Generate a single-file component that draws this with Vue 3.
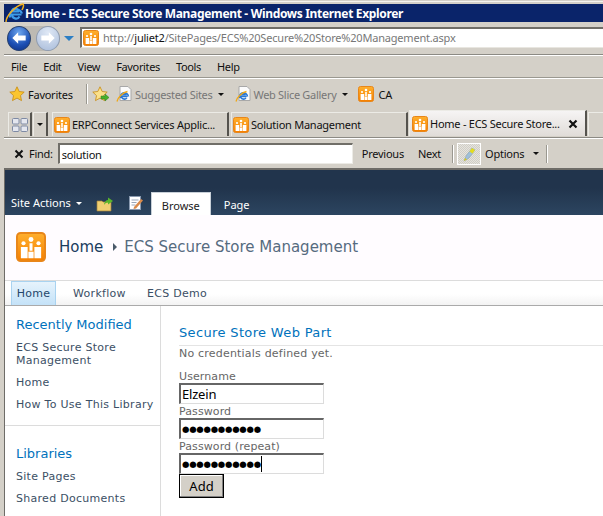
<template>
  <div class="window">
    <svg class="defs" width="0" height="0">
      <defs>
        <linearGradient id="spBg" x1="0" y1="0" x2="0" y2="1">
          <stop offset="0" stop-color="#ffb02e" />
          <stop offset="1" stop-color="#f57f00" />
        </linearGradient>
        <symbol id="sp" viewBox="0 0 16 16">
          <rect x="0.5" y="0.5" width="15" height="15" rx="2" fill="url(#spBg)" stroke="#e8861a" />
          <circle cx="8" cy="4" r="1.3" fill="#fff" />
          <circle cx="4" cy="6" r="1.1" fill="#fff" />
          <circle cx="12" cy="6" r="1.1" fill="#fff" />
          <rect x="7.2" y="6" width="1.6" height="4" fill="#fff" />
          <rect x="2.6" y="8" width="3.6" height="6" fill="#fff" />
          <rect x="9.8" y="8" width="3.6" height="6" fill="#fff" />
          <rect x="6.6" y="10.5" width="2.8" height="3.5" fill="#fff" />
        </symbol>
        <symbol id="ie" viewBox="0 0 16 16">
          <path d="M4 .5h8l3 3v11H4z" fill="#fbfbfb" stroke="#a8a8a8" />
          <path d="M11.600 10.500H5.600a2.900 2.900 0 0 0 5.300 1.300M5.700 8.800h4.200a2.200 2.200 0 0 0-4.200 0zM4.700 12a4 4 0 1 1 7.800-1.500" fill="none" stroke="#2a78d4" stroke-width="1.500" />
          <path d="M1 15.500C2 11 7 6.500 11.500 5.500" fill="none" stroke="#f0a818" stroke-width="1.300" />
        </symbol>
      </defs>
    </svg>

    <div class="title-bar">
      <svg class="title-ie" viewBox="0 0 20 20" width="20" height="20">
        <path d="M16.500 11.500H7a4 4 0 0 0 7.500 2M7.200 8.500h6a3 3 0 0 0-6 0z" fill="none" stroke="#3d9be8" stroke-width="2.200" />
        <path d="M5.200 14.500A6.200 6.200 0 1 1 17 10.500" fill="none" stroke="#3d9be8" stroke-width="2.200" />
        <path d="M1 19C1 13 10 3 18 1c1.500 1.500 0 4-1 6" fill="none" stroke="#f2b01e" stroke-width="1.500" />
      </svg>
      <span>Home - ECS Secure Store Management - Windows Internet Explorer</span>
    </div>

    <div class="address-row">
      <div class="nav-buttons">
        <span class="round back">
          <svg viewBox="0 0 24 24" width="24" height="24"><path d="M4 12l7-7v4h9v6h-9v4z" fill="#fff" /></svg>
        </span>
        <span class="round forward">
          <svg viewBox="0 0 24 24" width="24" height="24"><path d="M20 12l-7-7v4H4v6h9v4z" fill="#fff" /></svg>
        </span>
      </div>
      <span class="nav-drop"></span>
      <div class="address-box">
        <svg class="sp-small" width="16" height="16"><use href="#sp" /></svg>
        <span class="url">http://<b>juliet2</b>/SitePages/ECS%20Secure%20Store%20Management.aspx</span>
      </div>
    </div>

    <div class="menu-row">
      <span v-for="item in menuItems" :key="item">{{ item }}</span>
    </div>

    <div class="fav-row">
      <svg class="star" viewBox="0 0 16 16" width="16" height="16">
        <path d="M8 .8l2.200 4.700 5 .6-3.700 3.500 1 5L8 12.100 3.500 14.600l1-5L.8 6.100l5-.6z" fill="#fbc52f" stroke="#c68a12" stroke-width=".8" />
      </svg>
      <span class="fav-label">Favorites</span>
      <span class="fav-sep"></span>
      <svg class="star-add" viewBox="0 0 18 16" width="18" height="16">
        <path d="M8 .8l2.200 4.700 5 .6-3.700 3.500 1 5L8 12.100 3.500 14.600l1-5L.8 6.100l5-.6z" fill="#fbe08a" stroke="#c68a12" stroke-width=".8" />
        <path d="M9 10h4V8l4 3.500L13 15v-2H9z" fill="#47b02c" stroke="#2f7d1c" stroke-width=".5" />
      </svg>
      <svg class="page-ie" width="16" height="16"><use href="#ie" /></svg>
      <span class="fav-muted">Suggested Sites</span>
      <span class="caret dark"></span>
      <svg class="page-ie second" width="16" height="16"><use href="#ie" /></svg>
      <span class="fav-muted web">Web Slice Gallery</span>
      <span class="caret dark"></span>
      <svg class="sp-fav" width="16" height="16"><use href="#sp" /></svg>
      <span class="fav-ca">CA</span>
    </div>

    <div class="tab-row">
      <span class="quick-tabs">
        <svg viewBox="0 0 16 14" width="16" height="14">
          <rect x=".5" y=".5" width="6.500" height="5.500" rx="1" fill="#e4e6ee" stroke="#7e8aa4" />
          <rect x="9" y=".5" width="6.500" height="5.500" rx="1" fill="#e4e6ee" stroke="#7e8aa4" />
          <rect x=".5" y="8" width="6.500" height="5.500" rx="1" fill="#e4e6ee" stroke="#7e8aa4" />
          <rect x="9" y="8" width="6.500" height="5.500" rx="1" fill="#e4e6ee" stroke="#7e8aa4" />
        </svg>
      </span>
      <span class="tab-list-drop"><span class="caret dark"></span></span>
      <div class="tab first">
        <svg width="16" height="16"><use href="#sp" /></svg>
        <span>ERPConnect Services Applic...</span>
      </div>
      <div class="tab second">
        <svg width="16" height="16"><use href="#sp" /></svg>
        <span>Solution Management</span>
      </div>
      <div class="tab active">
        <svg width="16" height="16"><use href="#sp" /></svg>
        <span class="active-label">Home - ECS Secure Store...</span>
        <svg class="tab-close" viewBox="0 0 10 10" width="10" height="10">
          <path d="M1.500 1.500l7 7M8.500 1.500l-7 7" stroke="#111" stroke-width="2.200" />
        </svg>
      </div>
      <div class="tab stub"></div>
    </div>

    <div class="find-row">
      <svg class="find-close" viewBox="0 0 10 10" width="10" height="10">
        <path d="M1.500 1.500l7 7M8.500 1.500l-7 7" stroke="#111" stroke-width="2" />
      </svg>
      <span class="find-label">Find:</span>
      <div class="find-box">solution</div>
      <span class="find-link prev">Previous</span>
      <span class="find-link next">Next</span>
      <span class="find-sep"></span>
      <span class="highlight">
        <svg viewBox="0 0 18 18" width="18" height="18">
          <path d="M4 16l2-5 6-8 3 2-6 8z" fill="#9fc0d8" stroke="#7e9ab0" stroke-width=".5" />
          <path d="M9.500 6.500L12 3l3 2-2.500 3.500z" fill="#e4dc1e" />
          <path d="M4 16l1-3 2 1.500z" fill="#d8c81a" />
        </svg>
      </span>
      <span class="find-link options">Options</span>
      <span class="caret dark opt"></span>
      <span class="find-sep end"></span>
    </div>

    <div class="page">
      <div class="ribbon">
        <span class="site-actions">Site Actions</span>
        <span class="caret light"></span>
        <svg class="folder" viewBox="0 0 18 16" width="18" height="16">
          <path d="M1 5h5l1 1h8v9H1z" fill="#f0cf72" stroke="#a4823a" stroke-width=".7" />
          <path d="M8 9c0-3 2-5 4-5V1.500L17 5l-5 3.500V6.500c-2 0-3 1-4 2.500z" fill="#59b52c" />
        </svg>
        <svg class="edit" viewBox="0 0 16 16" width="16" height="16">
          <rect x="1.500" y="1.500" width="11" height="13" fill="#fff" stroke="#8a9ab0" />
          <path d="M3.500 5h7M3.500 7.500h5M3.500 10h4" stroke="#9aa6b8" />
          <path d="M6 12l7-8 2 1.500-7 8-2.500.5z" fill="#d98a4a" />
        </svg>
        <span class="ribbon-tab selected">Browse</span>
        <span class="ribbon-tab">Page</span>
      </div>

      <div class="site-title">
        <svg class="site-logo" width="30" height="30"><use href="#sp" /></svg>
        <span class="crumb-home">Home</span>
        <span class="crumb-arrow"></span>
        <span class="crumb-page">ECS Secure Store Management</span>
      </div>

      <div class="top-nav">
        <span class="top-item current">Home</span>
        <span class="top-item">Workflow</span>
        <span class="top-item">ECS Demo</span>
      </div>

      <div class="body-area">
        <aside class="side-nav">
          <section class="side-group recent">
            <h3>Recently Modified</h3>
            <a v-for="link in recentLinks" :key="link">{{ link }}</a>
          </section>
          <section class="side-group libraries">
            <h3>Libraries</h3>
            <a v-for="link in libraryLinks" :key="link">{{ link }}</a>
          </section>
        </aside>

        <main class="content">
          <h2>Secure Store Web Part</h2>
          <p class="status">No credentials defined yet.</p>
          <label>Username</label>
          <div class="field plain">Elzein</div>
          <label>Password</label>
          <div class="field dots">●●●●●●●●●●●</div>
          <label>Password (repeat)</label>
          <div class="field dots caret-end">●●●●●●●●●●●<i></i></div>
          <button type="button" class="add">Add</button>
        </main>
      </div>
    </div>
  </div>
</template>

<script setup>
const menuItems = ['File', 'Edit', 'View', 'Favorites', 'Tools', 'Help']
const recentLinks = ['ECS Secure Store Management', 'Home', 'How To Use This Library']
const libraryLinks = ['Site Pages', 'Shared Documents']
</script>

<style scoped>
.window {
  width: 603px;
  height: 516px;
  overflow: hidden;
  background: #d4d0c8;
  padding-top: 4px;
  box-sizing: border-box;
  box-shadow: inset 0 1px 0 #d4d0c8, inset 0 2px 0 #f4f3ef;
  font-family: "Noto Sans", "DejaVu Sans", sans-serif;
  font-size: 11px;
  letter-spacing: -0.25px;
  color: #111;
  position: relative;
}

.defs {
  position: absolute;
}

.title-bar {
  height: 18px;
  margin-left: 4px;
  background: #0a246a;
  color: #fff;
  display: flex;
  align-items: center;
  font-weight: 700;
  font-size: 12px;
  letter-spacing: -0.33px;
  white-space: nowrap;
}

.title-ie {
  margin: -1px 0 0 1px;
  flex: none;
}

.address-row {
  height: 33px;
  margin-left: 4px;
  display: flex;
  align-items: center;
  border-bottom: 1px solid #8c8a84;
  box-sizing: border-box;
}

.nav-buttons {
  display: flex;
  align-items: center;
  background: #bdbab3;
  border-radius: 14px;
  margin-left: 3px;
}

.round {
  width: 24px;
  height: 25px;
  border-radius: 50%;
  box-sizing: border-box;
  display: flex;
  align-items: center;
  justify-content: center;
}

.round svg {
  width: 20px;
  height: 20px;
}

.back {
  background: radial-gradient(circle at 50% 25%, #6ea7ee, #1c4fb4 60%, #0d2f80);
  border: 1px solid #26406f;
}

.forward {
  margin-left: 5px;
  background: radial-gradient(circle at 50% 25%, #dfe8f5, #a9bcda);
  border: 1px solid #8f9cb0;
}

.nav-drop {
  width: 0;
  height: 0;
  margin: 1px 6px 0 4px;
  border-left: 5px solid transparent;
  border-right: 5px solid transparent;
  border-top: 5px solid #2d7fc4;
}

.address-box {
  flex: 1;
  height: 21px;
  margin-top: -2px;
  display: flex;
  align-items: center;
  background: #fff;
  border-top: 2px solid #706e68;
  border-left: 2px solid #706e68;
  border-bottom: 1px solid #e8e6e0;
  box-sizing: border-box;
  white-space: nowrap;
}

.sp-small {
  margin-left: 1px;
  flex: none;
}

.url {
  margin-left: 4px;
  color: #777;
  letter-spacing: -0.2px;
}

.url b {
  color: #111;
  font-weight: 400;
}

.menu-row {
  height: 23px;
  margin-left: 4px;
  display: flex;
  align-items: center;
  gap: 16px;
  padding: 0 0 0 7px;
  border-top: 1px solid #fff;
  border-bottom: 1px solid #9a9890;
  box-sizing: border-box;
  letter-spacing: -0.35px;
}

.fav-row {
  height: 31px;
  margin-left: 4px;
  display: flex;
  align-items: center;
  border-top: 1px solid #fff;
  box-sizing: border-box;
}

.star {
  margin-left: 5px;
  flex: none;
}

.fav-label {
  margin-left: 3px;
  width: 45px;
}

.fav-sep {
  width: 1px;
  height: 20px;
  margin: 0 4px 0 13px;
  background: #9a9890;
  border-right: 1px solid #fff;
}

.star-add {
  flex: none;
}

.page-ie {
  margin-left: 6px;
  flex: none;
}

.page-ie.second {
  margin-left: 11px;
}

.fav-muted {
  margin-left: 3px;
  color: #777;
  letter-spacing: -0.3px;
}

.fav-muted.web {
  margin-left: 2px;
}

.caret {
  width: 0;
  height: 0;
  margin-left: 6px;
  border-left: 3px solid transparent;
  border-right: 3px solid transparent;
  flex: none;
}

.caret.dark {
  border-top: 3px solid #111;
}

.caret.light {
  border-top: 3px solid #fff;
}

.sp-fav {
  margin-left: 10px;
  flex: none;
}

.fav-ca {
  margin-left: 4px;
}

.tab-row {
  height: 29px;
  margin-left: 4px;
  display: flex;
  align-items: flex-end;
  border-bottom: 1px solid #8c8a84;
  box-sizing: border-box;
}

.quick-tabs {
  width: 21px;
  height: 23px;
  margin: 0 0 1px 4px;
  display: flex;
  flex: none;
  align-items: center;
  justify-content: center;
  border-top: 1px solid #ecebe6;
  border-left: 1px solid #ecebe6;
  border-right: 2px solid #55534e;
  box-sizing: content-box;
}

.tab-list-drop {
  width: 12px;
  height: 23px;
  margin: 0 0 1px 1px;
  display: flex;
  flex: none;
  align-items: center;
  border-top: 1px solid #ecebe6;
  border-left: 1px solid #ecebe6;
  border-right: 2px solid #55534e;
}

.tab-list-drop .caret {
  margin-left: 3px;
}

.tab {
  height: 23px;
  display: flex;
  align-items: center;
  gap: 2px;
  padding-left: 1px;
  margin-bottom: 1px;
  border-top: 1px solid #ecebe6;
  border-left: 1px solid #ecebe6;
  border-right: 2px solid #55534e;
  white-space: nowrap;
  flex: none;
  box-sizing: content-box;
}

.tab svg {
  flex: none;
}

.tab.first {
  width: 173px;
  margin-left: 4px;
}

.tab.second {
  width: 173px;
  margin-left: 2px;
}

.tab.active {
  width: 173px;
  height: 25px;
  margin-left: 1px;
  padding-left: 2px;
  background: linear-gradient(#f6f4f4, #e0dcd8);
}

.active-label {
  width: 135px;
}

.tab.active .tab-close {
  margin-left: 1px;
}

.tab.stub {
  width: 20px;
  margin-left: 1px;
  border-right: 0;
}

.find-row {
  height: 32px;
  margin-left: 4px;
  display: flex;
  align-items: center;
  border-top: 1px solid #fff;
  border-bottom: 2px solid #6e6c68;
  box-sizing: border-box;
}

.find-close {
  margin-left: 10px;
  flex: none;
}

.find-label {
  margin-left: 5px;
}

.find-box {
  width: 295px;
  height: 21px;
  margin-left: 5px;
  padding-left: 2px;
  background: #fff;
  border-top: 2px solid #706e68;
  border-left: 2px solid #706e68;
  border-right: 1px solid #ecebe6;
  border-bottom: 1px solid #ecebe6;
  box-sizing: border-box;
  display: flex;
  align-items: center;
}

.find-link.prev {
  margin-left: 9px;
}

.find-link.next {
  margin-left: 14px;
}

.find-sep {
  width: 1px;
  height: 18px;
  margin-left: 11px;
  background: #9a9890;
  border-right: 1px solid #fff;
}

.highlight {
  width: 22px;
  height: 20px;
  margin-left: 3px;
  display: flex;
  align-items: center;
  justify-content: center;
  background: repeating-conic-gradient(#e6e4de 0 25%, #d0cec6 0 50%) 0 0 / 2px 2px;
  border: 1px solid #fff;
}

.find-link.options {
  margin-left: 4px;
}

.caret.opt {
  margin-left: 9px;
}

.find-sep.end {
  margin-left: 7px;
}

.page {
  margin-left: 5px;
  height: 346px;
  background: #fff;
  box-shadow: -1px 0 0 #6e6c68;
  display: flex;
  flex-direction: column;
  letter-spacing: 0;
}

.ribbon {
  height: 45px;
  flex: none;
  display: flex;
  align-items: flex-end;
  background: linear-gradient(#21344c, #21344c 40%, #2c4560);
  color: #fff;
  font-size: 11px;
}

.site-actions {
  margin: 0 0 5px 6px;
}

.ribbon .caret.light {
  margin: 0 0 10px 5px;
}

.folder {
  margin: 0 0 3px 14px;
  flex: none;
}

.edit {
  margin: 0 0 4px 14px;
  flex: none;
}

.ribbon-tab {
  height: 23px;
  line-height: 25px;
  padding: 0 13px;
  box-sizing: border-box;
}

.ribbon-tab.selected {
  width: 60px;
  margin-left: 7px;
  background: #fff;
  color: #222;
  border: 1px solid #c8d0d8;
  border-bottom: 0;
  text-align: center;
  padding: 0;
}

.site-title {
  height: 65px;
  flex: none;
  display: flex;
  align-items: center;
  padding-bottom: 2px;
  box-sizing: border-box;
  background: #fffcff;
  font-family: "DejaVu Sans", sans-serif;
  font-size: 15px;
  white-space: nowrap;
}

.site-logo {
  margin-left: 11px;
  flex: none;
}

.crumb-home {
  margin-left: 13px;
  color: #1b3d5e;
}

.crumb-arrow {
  width: 0;
  height: 0;
  margin: 0 7px 0 10px;
  border-top: 4px solid transparent;
  border-bottom: 4px solid transparent;
  border-left: 4px solid #4a5a6a;
}

.crumb-page {
  color: #566b80;
}

.top-nav {
  height: 26px;
  flex: none;
  display: flex;
  background: linear-gradient(#fff, #fff 55%, #f3f3f3);
  border-top: 1px solid #dcdcdc;
  border-bottom: 1px solid #aaa;
  box-sizing: border-box;
  font-family: "DejaVu Sans", sans-serif;
  font-size: 11px;
  letter-spacing: 0.3px;
  color: #3b4f65;
}

.top-item {
  display: flex;
  align-items: center;
  margin-right: 21px;
}

.top-item:first-child {
  margin-left: 6px;
  margin-right: 17px;
}

.top-item.current {
  width: 45px;
  justify-content: center;
  box-sizing: border-box;
  background: linear-gradient(#e6f3fc, #c4e2f8);
  border: 1px solid #a9d3f0;
  border-bottom: 0;
  color: #23466b;
}

.body-area {
  flex: 1;
  display: flex;
  font-family: "DejaVu Sans", sans-serif;
  font-size: 11px;
}

.side-nav {
  width: 156px;
  flex: none;
  border-right: 1px solid #dcdcdc;
  box-sizing: border-box;
}

.side-group {
  padding-left: 11px;
}

.side-group h3 {
  margin: 0 0 8px;
  font-size: 13px;
  font-weight: 400;
  line-height: 16px;
  color: #0072bc;
}

.side-group a {
  display: block;
  margin-bottom: 9px;
  line-height: 13px;
  letter-spacing: 0.28px;
  color: #3b4f65;
}

.recent {
  padding-top: 11px;
  padding-bottom: 5px;
  border-bottom: 1px solid #dcdcdc;
}

.libraries {
  padding-top: 20px;
}

.content {
  flex: 1;
  padding: 19px 0 0 18px;
  min-width: 0;
}

.content h2 {
  margin: 0;
  font-size: 13px;
  font-weight: 400;
  line-height: 16px;
  letter-spacing: 0.35px;
  color: #0072bc;
  padding-bottom: 4px;
  border-bottom: 1px solid #e4e4e4;
}

.status {
  margin: 1px 0 8px;
  line-height: 14px;
  letter-spacing: 0.2px;
  color: #666;
}

label {
  display: block;
  line-height: 13px;
  letter-spacing: 0.1px;
  color: #666;
  padding-top: 1px;
}

.field {
  width: 145px;
  height: 21px;
  padding-left: 1px;
  background: #fff;
  border-top: 2px solid #666;
  border-left: 2px solid #666;
  border-right: 1px solid #dcdcdc;
  border-bottom: 1px solid #dcdcdc;
  box-sizing: border-box;
  display: flex;
  align-items: center;
  color: #000;
  font-family: "Noto Sans", sans-serif;
  font-size: 13px;
  letter-spacing: -0.2px;
}

.field.dots {
  font-size: 8.500px;
  font-family: "DejaVu Sans", sans-serif;
  letter-spacing: -0.25px;
}

.field i {
  width: 1px;
  height: 16px;
  background: #000;
}

.add {
  display: block;
  width: 45px;
  height: 24px;
  margin-top: 0;
  padding: 0;
  background: #d4d0c8;
  border: 1px solid #000;
  box-shadow: inset -1px -1px 0 #808080, inset 1px 1px 0 #fff;
  color: #000;
  font-family: "Noto Sans", sans-serif;
  font-size: 13px;
}
</style>
